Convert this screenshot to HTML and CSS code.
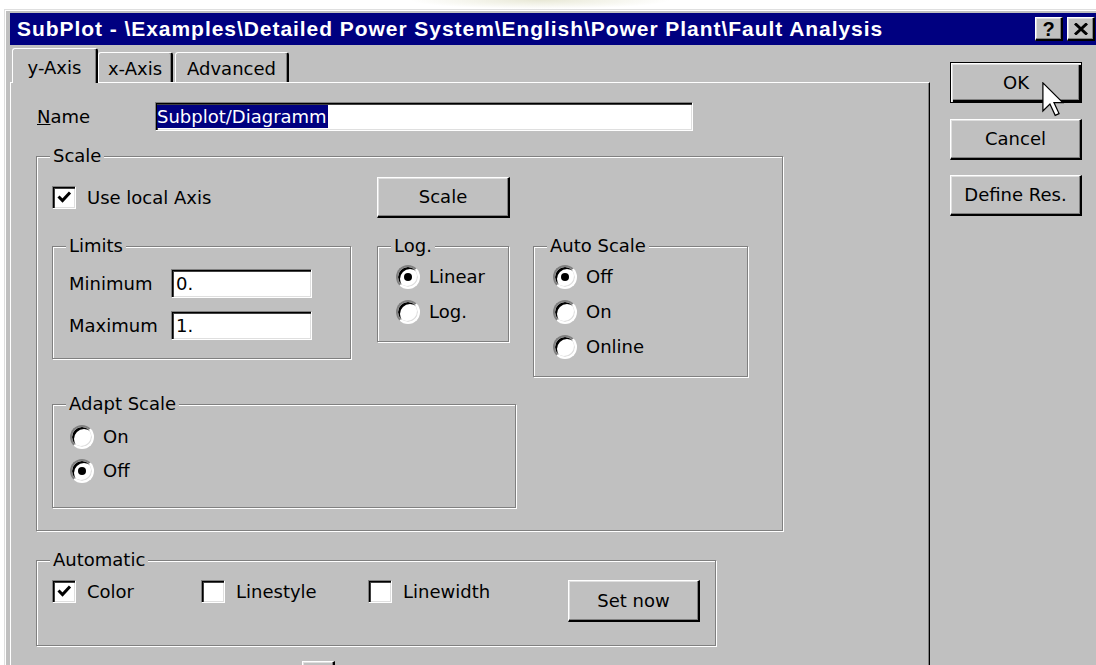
FILE: index.html
```html
<!DOCTYPE html>
<html lang="en">
<head>
<meta charset="utf-8">
<title>SubPlot</title>
<link rel="stylesheet" href="styles.css">
</head>
<body>
<div class="window">
  <div class="titlebar">
    <span class="title">SubPlot - \Examples\Detailed Power System\English\Power Plant\Fault Analysis</span>
    <div class="caption-buttons">
      <div class="cap-btn">?</div>
      <div class="cap-btn">
        <svg width="14" height="12" viewBox="0 0 14 12"><path d="M1 0.5 L13 11.5 M13 0.5 L1 11.5" stroke="#000" stroke-width="3"/></svg>
      </div>
    </div>
  </div>

  <div class="client">
    <div class="tabs-area">
      <div class="tabs">
        <div class="tab active">y-Axis</div>
        <div class="tab tab-x">x-Axis</div>
        <div class="tab tab-adv">Advanced</div>
      </div>

      <div class="panel">
        <div class="name-row">
          <span class="name-label"><u>N</u>ame</span>
          <div class="field name-field"><span class="selection">Subplot/Diagramm</span></div>
        </div>

        <div class="group scale-group">
          <span class="group-label">Scale</span>
          <div class="row-top">
            <div class="check-item use-local">
              <span class="checkbox"><svg width="21" height="21" viewBox="0 0 21 21"><path d="M4.5 9.5 L8.5 13.5 L16 5.5" fill="none" stroke="#000" stroke-width="3"/></svg></span>
              Use local Axis
            </div>
            <div class="button scale-btn">Scale</div>
          </div>

          <div class="row-mid">
            <div class="group limits">
              <span class="group-label">Limits</span>
              <div class="limit-row">
                <span class="limit-label">Minimum</span>
                <div class="field limit-field">0.</div>
              </div>
              <div class="limit-row second">
                <span class="limit-label">Maximum</span>
                <div class="field limit-field">1.</div>
              </div>
            </div>

            <div class="group log">
              <span class="group-label">Log.</span>
              <div class="radio-item"><span class="radio on"></span>Linear</div>
              <div class="radio-item"><span class="radio"></span>Log.</div>
            </div>

            <div class="group auto">
              <span class="group-label">Auto Scale</span>
              <div class="radio-item"><span class="radio on"></span>Off</div>
              <div class="radio-item"><span class="radio"></span>On</div>
              <div class="radio-item"><span class="radio"></span>Online</div>
            </div>
          </div>

          <div class="group adapt">
            <span class="group-label">Adapt Scale</span>
            <div class="radio-item"><span class="radio"></span>On</div>
            <div class="radio-item tight"><span class="radio on"></span>Off</div>
          </div>
        </div>

        <div class="group automatic">
          <span class="group-label">Automatic</span>
          <div class="check-item item-color">
            <span class="checkbox"><svg width="21" height="21" viewBox="0 0 21 21"><path d="M4.5 9.5 L8.5 13.5 L16 5.5" fill="none" stroke="#000" stroke-width="3"/></svg></span>
            Color
          </div>
          <div class="check-item item-style"><span class="checkbox"></span>Linestyle</div>
          <div class="check-item item-width"><span class="checkbox"></span>Linewidth</div>
          <div class="button setnow-btn">Set now</div>
        </div>

        <div class="bottom-row">
          <div class="button small-btn"></div>
        </div>
      </div>
    </div>

    <div class="side">
      <div class="button default side-btn">OK</div>
      <div class="button side-btn cancel">Cancel</div>
      <div class="button side-btn define">Define Res.</div>
    </div>
  </div>
</div>

<svg class="pointer" width="22" height="36" viewBox="0 0 12.5 20.5">
  <path d="M0.5 0.5 L0.5 16.5 L4.5 12.5 L7.5 19 L9.7 18 L6.8 11.7 L11.8 11.7 Z" fill="#fff" stroke="#000" stroke-width="0.7" stroke-linejoin="miter"/>
</svg>
</body>
</html>
```

FILE: styles.css
```css
* {
  box-sizing: border-box;
}

html,
body {
  margin: 0;
  height: 665px;
  overflow: hidden;
}

body {
  position: relative;
  background: #fff radial-gradient(ellipse 130px 9px at 540px 0, rgba(214, 214, 180, 0.55), rgba(255, 255, 255, 0));
  font-family: "DejaVu Sans", "Liberation Sans", sans-serif;
  font-size: 18px;
  line-height: 22px;
  color: #000;
}

/* outer dialog frame */
.window {
  margin: 9px 0 0 4px;
  width: 1120px;
  height: 656px;
  background: #c0c0c0;
  border-top: 1px solid #dfdfdf;
  border-left: 1px solid #dfdfdf;
  box-shadow: inset 1px 1px 0 #fff;
  padding: 3px 0 0 5px;
}

.titlebar {
  width: 1089px;
  height: 32px;
  background: #000080;
  display: flex;
  align-items: center;
  padding-left: 7px;
  color: #fff;
  font-family: "Liberation Sans", Arial, sans-serif;
  font-weight: bold;
  font-size: 21px;
  line-height: 32px;
  white-space: nowrap;
}

.title {
  letter-spacing: 0.95px;
}

.caption-buttons {
  margin-left: auto;
  margin-right: 4px;
  display: flex;
  gap: 4px;
}

.cap-btn {
  width: 28px;
  height: 24px;
  background: #c0c0c0;
  border-style: solid;
  border-width: 1px 2px 2px 1px;
  border-color: #fff #000 #000 #fff;
  box-shadow: inset -1px -1px 0 #808080, inset 1px 1px 0 #dfdfdf;
  display: flex;
  align-items: center;
  justify-content: center;
  color: #000;
  font-size: 20px;
  line-height: 20px;
  letter-spacing: 0;
}

.client {
  display: flex;
  align-items: flex-start;
}

.tabs-area {
  width: 920px;
}

/* tab strip */
.tabs {
  display: flex;
  align-items: flex-end;
  height: 37px;
  padding-left: 2px;
}

.tab {
  height: 30px;
  background: #c0c0c0;
  border-top: 1px solid #fff;
  border-left: 1px solid #fff;
  border-right: 2px solid #000;
  border-radius: 3px 3px 0 0;
  box-shadow: inset -1px 0 0 #808080;
  padding-top: 5px;
  text-align: center;
}

.tab.active {
  position: relative;
  z-index: 1;
  width: 86px;
  height: 35px;
  margin-bottom: -1px;
  padding-top: 8px;
}

.tab-x {
  width: 75px;
}

.tab-adv {
  width: 114px;
  margin-left: 2px;
}

.panel {
  height: 600px;
  border-top: 1px solid #fff;
  border-left: 1px solid #fff;
  border-right: 1px solid #000;
  box-shadow: inset -1px 0 0 #808080;
  padding: 19px 0 0 25px;
}

/* sunken edit field */
.field {
  background: #fff;
  border: 1px solid;
  border-color: #808080 #fff #fff #808080;
  box-shadow: inset 1px 1px 0 #000, inset 2px 2px 0 #404040, inset -1px -1px 0 #dfdfdf;
  display: flex;
  align-items: center;
  white-space: nowrap;
}

.name-row {
  display: flex;
  align-items: center;
  height: 29px;
}

.name-label {
  width: 118px;
  margin-left: 1px;
}

.name-field {
  width: 538px;
  height: 29px;
  padding-left: 1px;
}

.selection {
  background: #000080;
  color: #fff;
  line-height: 23px;
  padding-right: 1px;
}

/* etched group box */
.group {
  position: relative;
  border: 1px solid #808080;
  box-shadow: inset 1px 1px 0 #fff, 1px 1px 0 #fff;
}

.group-label {
  position: absolute;
  left: 13px;
  top: -12px;
  padding: 0 3px;
  background: #c0c0c0;
  line-height: 22px;
  white-space: nowrap;
}

.scale-group {
  width: 747px;
  height: 375px;
  margin-top: 25px;
  padding: 20px 0 0 15px;
}

.row-top {
  display: flex;
  align-items: center;
  height: 41px;
}

.use-local {
  width: 325px;
}

/* raised push button */
.button {
  background: #c0c0c0;
  border-style: solid;
  border-width: 1px 2px 2px 1px;
  border-color: #fff #000 #000 #fff;
  box-shadow: inset -1px -1px 0 #808080, inset 1px 1px 0 #dfdfdf;
  display: flex;
  align-items: center;
  justify-content: center;
  white-space: nowrap;
}

.button.default {
  border: 1px solid #000;
  box-shadow: inset 1px 1px 0 #fff, inset 2px 2px 0 #dfdfdf, inset -2px -2px 0 #000, inset -3px -3px 0 #808080;
}

.scale-btn {
  width: 133px;
  height: 41px;
}

.row-mid {
  display: flex;
  align-items: flex-start;
  margin-top: 28px;
}

.limits {
  width: 299px;
  height: 113px;
  padding: 22px 0 0 16px;
}

.limit-row {
  display: flex;
  align-items: center;
  height: 29px;
}

.limit-row.second {
  margin-top: 13px;
}

.limit-label {
  width: 102px;
}

.limit-field {
  width: 141px;
  height: 29px;
  padding-left: 4px;
}

.log {
  width: 132px;
  height: 96px;
  margin-left: 26px;
  padding: 18px 0 0 18px;
}

.auto {
  width: 215px;
  height: 131px;
  margin-left: 24px;
  padding: 18px 0 0 19px;
}

.radio-item {
  display: flex;
  align-items: center;
  height: 24px;
  white-space: nowrap;
}

.radio-item + .radio-item {
  margin-top: 11px;
}

.radio-item.tight {
  margin-top: 10px;
}

.radio {
  position: relative;
  width: 24px;
  height: 24px;
  flex: none;
  margin-right: 9px;
  border-radius: 50%;
  background: #fff;
  border: 2px solid;
  border-color: #808080 #fff #fff #808080;
  box-shadow: inset 2px 2px 0 #000, inset -1px -1px 0 #dfdfdf;
}

.radio.on::after {
  content: "";
  position: absolute;
  left: 6px;
  top: 6px;
  width: 8px;
  height: 8px;
  border-radius: 50%;
  background: #000;
}

.adapt {
  width: 464px;
  height: 104px;
  margin-top: 27px;
  padding: 20px 0 0 17px;
}

.check-item {
  display: flex;
  align-items: center;
  height: 23px;
  white-space: nowrap;
}

.checkbox {
  width: 24px;
  height: 23px;
  flex: none;
  margin-right: 11px;
  background: #fff;
  border: 1px solid;
  border-color: #808080 #fff #fff #808080;
  box-shadow: inset 1px 1px 0 #000, inset 2px 2px 0 #404040, inset -1px -1px 0 #dfdfdf;
  display: flex;
  align-items: center;
  justify-content: center;
}

.automatic {
  display: flex;
  align-items: flex-start;
  width: 680px;
  height: 86px;
  margin-top: 29px;
  padding: 19px 0 0 15px;
}

.item-color {
  width: 149px;
}

.item-style {
  width: 167px;
}

.item-width {
  width: 200px;
}

.setnow-btn {
  width: 132px;
  height: 42px;
}

.bottom-row {
  margin-top: 15px;
  padding-left: 266px;
}

.small-btn {
  width: 33px;
  height: 22px;
}

/* OK / Cancel column */
.side {
  margin-left: 20px;
  padding-top: 17px;
  display: flex;
  flex-direction: column;
}

.side-btn {
  width: 132px;
  height: 41px;
}

.cancel {
  margin-top: 16px;
}

.define {
  margin-top: 15px;
}

.pointer {
  position: absolute;
  left: 1042px;
  top: 82px;
}
```
